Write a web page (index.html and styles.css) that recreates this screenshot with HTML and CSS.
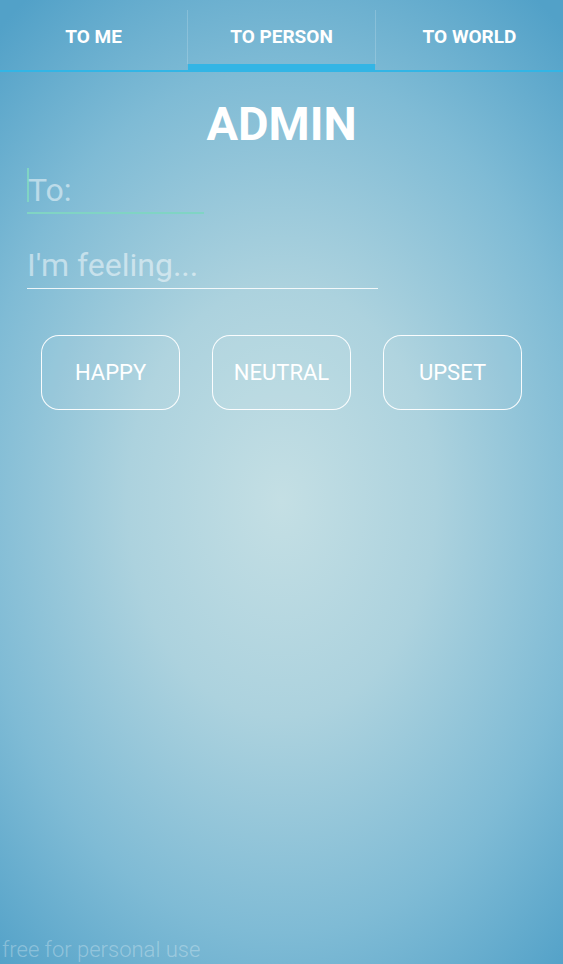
FILE: index.html
```html
<!DOCTYPE html>
<html>
<head>
<meta charset="utf-8">
<link rel="stylesheet" href="styles.css">
</head>
<body>
<div class="page">
  <nav class="tabs">
    <div class="tab">TO ME</div>
    <div class="sep"></div>
    <div class="tab active">TO PERSON</div>
    <div class="sep"></div>
    <div class="tab">TO WORLD</div>
  </nav>
  <h1 class="title">ADMIN</h1>
  <div class="field field-to">
    <span class="caret"></span>
    <span class="placeholder">To:</span>
  </div>
  <div class="field field-feel">
    <span class="placeholder">I'm feeling...</span>
  </div>
  <div class="moods">
    <div class="mood">HAPPY</div>
    <div class="mood">NEUTRAL</div>
    <div class="mood">UPSET</div>
  </div>
  <div class="footer">free for personal use</div>
</div>
</body>
</html>
```
FILE: styles.css
```css
html, body {
  margin: 0;
  padding: 0;
}
body {
  font-family: Roboto, "Liberation Sans", sans-serif;
  color: #fff;
  background: radial-gradient(ellipse 78% 64% at 50% 52%, #c4dfe4 0%, #acd2de 35%, #7fbbd5 70%, #52a1c8 100%);
  background-color: #52a1c8;
}
.page {
  height: 964px;
  display: flex;
  flex-direction: column;
  overflow: hidden;
}
.tabs {
  display: flex;
  height: 70px;
  border-bottom: 2px solid #33b5e5;
}
.tab {
  flex: 1;
  display: flex;
  align-items: center;
  justify-content: center;
  font-weight: 700;
  font-size: 19px;
  padding-top: 2px;
  box-sizing: border-box;
}
.tab.active {
  box-shadow: inset 0 -6px 0 #33b5e5;
}
.sep {
  width: 1px;
  margin: 10px 0 6px;
  background: rgba(255, 255, 255, 0.18);
}
.title {
  margin: 25px 0 0;
  font-size: 47px;
  line-height: 54px;
  font-weight: 700;
  text-align: center;
}
.field {
  display: flex;
  align-items: flex-start;
  margin-left: 27px;
  font-size: 32px;
  font-weight: 400;
  color: rgba(255, 255, 255, 0.5);
}
.field-to {
  width: 177px;
  margin-top: 17px;
  height: 44px;
  line-height: 44px;
  border-bottom: 2px solid #80d4c4;
}
.caret {
  width: 2px;
  height: 34px;
  background: #80d4c4;
  margin-right: -1px;
}
.field-feel {
  width: 351px;
  margin-top: 27px;
  height: 47px;
  line-height: 48px;
  border-bottom: 1px solid rgba(255, 255, 255, 0.85);
}
.moods {
  display: flex;
  gap: 32px;
  padding: 0 41px;
  margin-top: 46px;
}
.mood {
  width: 139px;
  height: 75px;
  box-sizing: border-box;
  border: 1px solid rgba(255, 255, 255, 0.95);
  border-radius: 18px;
  background: rgba(255, 255, 255, 0.05);
  display: flex;
  align-items: center;
  justify-content: center;
  font-size: 22px;
  font-weight: 400;
}
.footer {
  margin-top: auto;
  padding: 0 0 1px 2px;
  font-size: 22px;
  line-height: 27px;
  font-weight: 300;
  color: rgba(255, 255, 255, 0.3);
}
```
